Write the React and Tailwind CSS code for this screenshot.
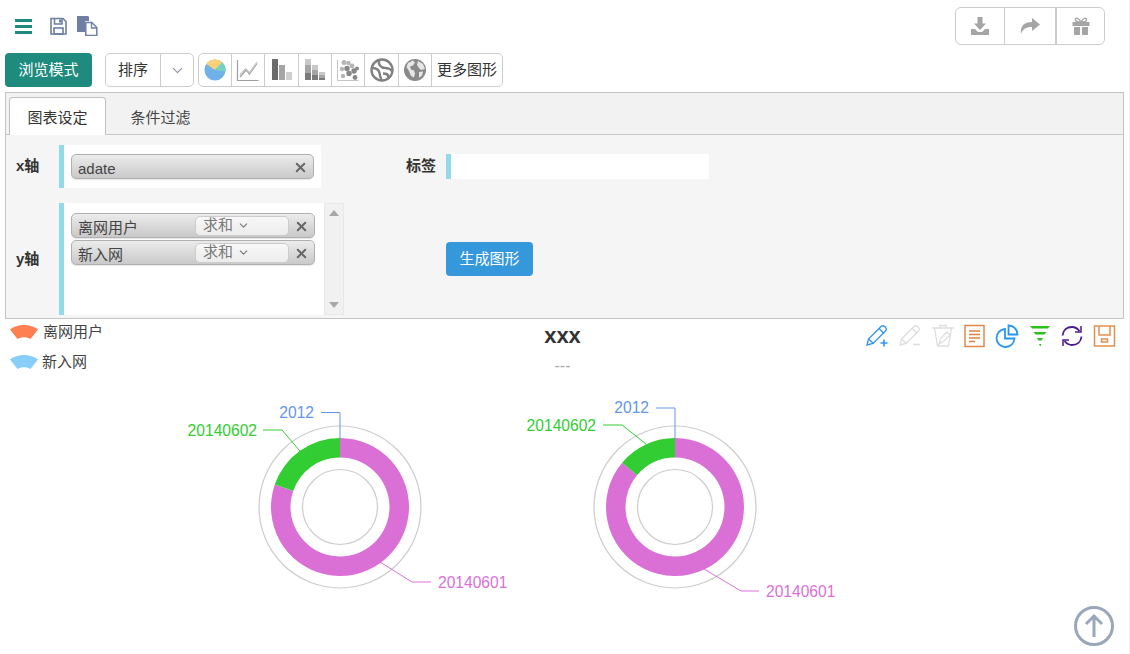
import React from "react";
import { X, ChevronDown } from "lucide-react";

const FONT = '"Liberation Sans","Noto Sans CJK SC",sans-serif';

function polar(cx, cy, r, deg) {
  const a = ((deg - 90) * Math.PI) / 180;
  return [cx + r * Math.cos(a), cy + r * Math.sin(a)];
}
function sector(cx, cy, r0, r1, from, to) {
  const large = to - from > 180 ? 1 : 0;
  const [a, b] = polar(cx, cy, r1, from);
  const [c, d] = polar(cx, cy, r1, to);
  const [e, f] = polar(cx, cy, r0, to);
  const [g, h] = polar(cx, cy, r0, from);
  return `M${a} ${b}A${r1} ${r1} 0 ${large} 1 ${c} ${d}L${e} ${f}A${r0} ${r0} 0 ${large} 0 ${g} ${h}Z`;
}

function Donut({ green, l2012, l0602, l0601, className }) {
  const cx = 170, cy = 120;
  return (
    <svg width="340" height="224" viewBox="0 0 340 224" className={className} style={{ fontFamily: FONT }}>
      <circle cx={cx} cy={cy} r="81" fill="none" stroke="#ccc" strokeWidth="1.2" />
      <circle cx={cx} cy={cy} r="37.5" fill="none" stroke="#ccc" strokeWidth="1.2" />
      <path d={sector(cx, cy, 49.5, 69, 0, 360 - green - 0.001)} fill="#da70d6" />
      <path d={sector(cx, cy, 49.5, 69, 360 - green, 360)} fill="#32cd32" />
      <polyline points={l2012.line} fill="none" stroke="#6495ed" strokeWidth="1" />
      <polyline points={l0602.line} fill="none" stroke="#32cd32" strokeWidth="1" />
      <polyline points={l0601.line} fill="none" stroke="#da70d6" strokeWidth="1" />
      <text x={l2012.x} y={l2012.y} textAnchor="end" fontSize="15.6" fill="#6495ed">2012</text>
      <text x={l0602.x} y={l0602.y} textAnchor="end" fontSize="15.6" fill="#32cd32">20140602</text>
      <text x={l0601.x} y={l0601.y} fontSize="15.6" fill="#da70d6">20140601</text>
    </svg>
  );
}

function Fan({ color }) {
  return (
    <svg width="28" height="16" viewBox="0 0 28 16">
      <path d="M0 5.5C7-.6 21-.6 28 5.5L20.5 15C16.500 12.500 11.500 12.500 7.500 15Z" fill={color} />
    </svg>
  );
}

const ChartIcons = [
  <svg key="pie" width="22" height="22" viewBox="0 0 24 24">
    <circle cx="12" cy="12" r="11.500" fill="#6fb1e8" />
    <path d="M12 12L2.500 5.500A11.500 11.500 0 0 1 20 3.700Z" fill="#fbd078" />
    <path d="M12 12L20 3.700A11.500 11.500 0 0 1 23.500 13.600Z" fill="#72d4c4" />
  </svg>,
  <svg key="line" width="24" height="24" viewBox="0 0 24 24" fill="none" stroke="#9e9e9e" strokeWidth="1.200">
    <path d="M1.500 2v20.500h21" />
    <path d="M4 19l6-7 3.500 4L21 5.500" />
    <path d="M4 16.500l5.500-6 4 4L21 4" stroke="#c8c8c8" />
  </svg>,
  <svg key="bar" width="24" height="24" viewBox="0 0 24 24">
    <rect x="2" y="1" width="6" height="21" fill="#6b6b6b" />
    <rect x="9" y="7" width="6" height="15" fill="#a5a5a5" />
    <rect x="16" y="14" width="6" height="8" fill="#cfcfcf" />
  </svg>,
  <svg key="stack" width="24" height="24" viewBox="0 0 24 24">
    <rect x="2" y="1" width="6" height="6" fill="#c8c8c8" /><rect x="2" y="7" width="6" height="8" fill="#a5a5a5" /><rect x="2" y="15" width="6" height="7" fill="#7a7a7a" />
    <rect x="9" y="7" width="6" height="5" fill="#c8c8c8" /><rect x="9" y="12" width="6" height="5" fill="#a5a5a5" /><rect x="9" y="17" width="6" height="5" fill="#7a7a7a" />
    <rect x="16" y="14" width="6" height="3" fill="#c8c8c8" /><rect x="16" y="17" width="6" height="2.500" fill="#a5a5a5" /><rect x="16" y="19.500" width="6" height="2.500" fill="#7a7a7a" />
  </svg>,
  <svg key="scatter" width="24" height="24" viewBox="0 0 24 24">
    <path d="M1.500 2v20.500h21" fill="none" stroke="#c4c4c4" strokeWidth="1" />
    <g fill="#b5b5b5">
      <circle cx="8" cy="4.500" r="2.500" /><circle cx="12.500" cy="5" r="2.200" /><circle cx="6" cy="11" r="2.200" /><circle cx="16" cy="8" r="2.400" /><circle cx="7" cy="18" r="2.200" />
    </g>
    <g fill="#868686">
      <circle cx="11" cy="10.500" r="2.700" /><circle cx="18" cy="13" r="2.700" /><circle cx="13" cy="15.500" r="2.700" /><circle cx="21" cy="10.500" r="2" /><circle cx="19" cy="19.500" r="2.400" />
    </g>
  </svg>,
  <svg key="globe1" width="24" height="24" viewBox="0 0 24 24" fill="none" stroke="#808080" strokeWidth="2.400">
    <circle cx="12" cy="12" r="10.500" />
    <path d="M2 10c5 0 7 2 7.500 5s1 5 2 7" />
    <path d="M9 2.500c-1 4 2 7.500 6 7.500 3 0 5.500 1 6.500 3" />
    <path d="M13 15.500c3 0 5.500 0 5.500 5" />
  </svg>,
  <svg key="globe2" width="24" height="24" viewBox="0 0 24 24">
    <circle cx="12" cy="12" r="11" fill="#8a8a8a" />
    <path d="M5 5l5-2.500 2 2-2 3-3 1 1 3 3 1 1 3-1 4-3-1.500-2-5L3.500 9zM15 3l5 3 2 5-4 1-2-2-2-3zM16 14l4-.5-1 4-3 2.500z" fill="#e6e6e6" />
  </svg>,
];

const chartCellWidths = ["w-[32px]", "w-[33px]", "w-[34px]", "w-[33px]", "w-[33px]", "w-[34px]", "w-[33px]"];

function GroupCell({ className = "", children }) {
  return <div className={`flex items-center justify-center h-full border-l border-[#ccc] first:border-l-0 ${className}`}>{children}</div>;
}

function Chip({ label, withSum, className = "" }) {
  return (
    <div className={`flex items-center rounded-[5px] border border-[#b0b0b0] bg-gradient-to-b from-[#ececec] to-[#c9c9c9] shadow-[0_1px_1px_rgba(0,0,0,0.1)] text-[#444] text-[15px] pl-[6px] ${className}`}>
      <span className="flex-1 mt-[5px]">{label}</span>
      {withSum && (
        <div className="flex items-center w-[94px] h-[20px] mr-[5px] pl-[7px] rounded-[5px] border border-[#ccc] bg-gradient-to-b from-[#f8f8f8] to-[#ececec] text-[#777] gap-[4px] mt-[1px]">
          <span className="-mt-[2px]">求和</span>
          <ChevronDown size={13} strokeWidth={2} color="#777" className="-mt-[2px]" />
        </div>
      )}
      <X size={15} strokeWidth={3.200} color="#666" className="mr-[5px] mt-[1px] shrink-0" />
    </div>
  );
}

function ToolIcons() {
  return (
    <div className="flex items-center gap-[9px] pr-[13px]">
      <svg width="24" height="24" viewBox="0 0 24 24" fill="none" stroke="#2f95f2" strokeWidth="1.300">
        <path d="M2 21l1.500-6L16 2.500c1-1 2.500-1 3.500 0l1 1c1 1 1 2.500 0 3.500L8 19.500z" /><path d="M14 4.500l5 5M3.500 15l5 4.500" />
        <path d="M19 15.500v7M15.500 19h7" strokeWidth="1.600" />
      </svg>
      <svg width="24" height="24" viewBox="0 0 24 24" fill="none" stroke="#dedede" strokeWidth="1.300">
        <path d="M2 21l1.500-6L16 2.500c1-1 2.500-1 3.500 0l1 1c1 1 1 2.500 0 3.500L8 19.500z" /><path d="M14 4.500l5 5M3.500 15l5 4.500" />
        <path d="M15 20.500h7" strokeWidth="1.600" />
      </svg>
      <svg width="24" height="24" viewBox="0 0 24 24" fill="none" stroke="#dedede" strokeWidth="1.300">
        <path d="M1 4h22M9 4V1.500h6V4" /><path d="M3.500 4l3 18h11l3-18" /><path d="M8 20l2-6 6-6 3 3-6 6z" />
      </svg>
      <svg width="22" height="24" viewBox="0 0 22 24" fill="none" stroke="#e0813f" strokeWidth="1.400">
        <rect x="1" y="1.500" width="19" height="21" />
        <path d="M5 7h11M5 10.500h11M5 14h11M5 17.500h6" />
      </svg>
      <svg width="24" height="24" viewBox="0 0 24 24" fill="none" stroke="#2295f5" strokeWidth="1.800">
        <path d="M10 5a9 9 0 1 0 9.500 9.500H10z" /><path d="M13.500 1.500a9 9 0 0 1 9 9h-9z" />
      </svg>
      <svg width="22" height="24" viewBox="0 0 22 24" fill="#2cc21b" className="ml-[1px]">
        <path d="M1 2h20l-2 2.500H3z" /><path d="M4.500 8h13l-2 2.500H6.500z" /><path d="M8 14h6l-1.500 2.500h-3z" /><path d="M10 20h2.500l-1.200 2.500z" />
      </svg>
      <svg width="24" height="24" viewBox="0 0 24 24" fill="none" stroke="#4b1b91" strokeWidth="1.800">
        <path d="M2.500 11.500C3 6 7 3 12 3c3.500 0 5.500 1.500 7.500 4" /><path d="M21 2v6h-6" strokeWidth="1.500" />
        <path d="M21.500 12.500C21 18 17 21 12 21c-3.500 0-5.500-1.500-7.500-4" /><path d="M3 22v-6h6" strokeWidth="1.500" />
      </svg>
      <svg width="23" height="24" viewBox="0 0 23 24" fill="none" stroke="#e0914f" strokeWidth="1.500">
        <path d="M1.500 2h20v20h-20z" /><path d="M6 2v9h11V2" /><rect x="8.500" y="15" width="6" height="3" />
      </svg>
    </div>
  );
}

export default function App() {
  return (
    <div className="w-[1130px] h-[654px] bg-white relative overflow-hidden text-[#333] border-r border-[#f0f0f0]" style={{ fontFamily: FONT }}>
      {/* top bar */}
      <div className="h-[53px] flex items-start justify-between pl-[15px] pr-[24px]">
        <div className="flex items-center gap-[10px] pt-[16px]">
          <svg width="18" height="18" viewBox="0 0 18 18" fill="#1f8a80" className="mr-[7px]">
            <rect y="2" width="17" height="3" /><rect y="8" width="17" height="3" /><rect y="14" width="17" height="3" />
          </svg>
          <svg width="17" height="18" viewBox="0 0 17 18" fill="none" stroke="#6e7fa3" strokeWidth="1.600">
            <path d="M1 1.500h12l3 3V17H1z" /><path d="M4.500 1.500V7h7.500V1.500" /><rect x="4" y="11" width="9" height="6" /><rect x="9" y="2.500" width="2" height="3" fill="#6e7fa3" stroke="none" />
          </svg>
          <svg width="21" height="21" viewBox="0 0 21 21" className="-mt-[1px]">
            <path d="M0 1h11l1 1v4H8v11H0z" fill="#6e7fa3" />
            <path d="M8.800 7.500h6l5 5v8h-11z" fill="#fff" stroke="#6e7fa3" strokeWidth="1.500" />
            <path d="M14.500 7.500v5.500h5" fill="none" stroke="#6e7fa3" strokeWidth="1.300" />
          </svg>
        </div>
        <div className="mt-[7px] flex h-[38px] rounded-[6px] border border-[#ccc]">
          <GroupCell className="w-[48px]">
            <svg width="20" height="20" viewBox="0 0 20 20" fill="#a5a5a5">
              <path d="M7.500 1h5v6.500h3.500L10 14 4 7.500h3.500z" /><path d="M1 13h4l3 3h4l3-3h4v6H1z" />
            </svg>
          </GroupCell>
          <GroupCell className="w-[51px]">
            <svg width="22" height="18" viewBox="0 0 22 18" fill="#a5a5a5"><path d="M13 1l8 6.500-8 6.500V10C8 10 4 11 2 17 1 9 5 5 13 5z" /></svg>
          </GroupCell>
          <GroupCell className="w-[49px] !border-l-2">
            <svg width="18" height="18" viewBox="0 0 18 18" fill="#a5a5a5">
              <rect x="0.500" y="5" width="17" height="4" /><rect x="2" y="10" width="6" height="8" /><rect x="10" y="10" width="6" height="8" />
              <path d="M9 5C7 1 3 0 3.500 3 3.700 4.500 6 5 9 5c3 0 5.300-.5 5.500-2C15 0 11 1 9 5z" fill="none" stroke="#a5a5a5" strokeWidth="1.500" />
            </svg>
          </GroupCell>
        </div>
      </div>

      {/* toolbar */}
      <div className="flex h-[34px] pl-[5px]">
        <button className="w-[87px] h-full rounded-[4px] bg-[#1f8a7e] text-white text-[15px]">浏览模式</button>
        <div className="ml-[13px] flex w-[89px] h-full rounded-[5px] border border-[#ccc] text-[15px]">
          <GroupCell className="w-[54px] text-[#333]">排序</GroupCell>
          <GroupCell className="flex-1"><ChevronDown size={17} strokeWidth={1.500} color="#8a8fa0" /></GroupCell>
        </div>
        <div className="ml-[4px] flex w-[305px] h-full rounded-[5px] border border-[#ccc] text-[15px]">
          {ChartIcons.map((icon, i) => (
            <GroupCell key={i} className={chartCellWidths[i]}>{icon}</GroupCell>
          ))}
          <GroupCell className="flex-1 text-[#333]">更多图形</GroupCell>
        </div>
      </div>

      {/* settings panel */}
      <div className="ml-[5px] mt-[5px] w-[1119px] h-[227px] border border-[#c4c4c4] bg-[#f5f5f5] flex flex-col">
        <div className="h-[42px] shrink-0 bg-[#f2f2f2] border-b border-[#c8c8c8] flex items-end pl-[3px] text-[15px]">
          <div className="w-[97px] h-[40px] -mb-[3px] pt-[2px] bg-white border border-b-0 border-[#c0c0c0] rounded-t-[4px] flex items-center justify-center">
            图表设定
          </div>
          <div className="w-[109px] h-[40px] -mb-[3px] pt-[2px] flex items-center justify-center text-[#444]">条件过滤</div>
        </div>
        <div className="flex-1 bg-[#f5f5f5] flex relative pl-[10px]">
          <div className="w-[420px] shrink-0 flex flex-col">
            <div className="flex items-center mt-[10px] h-[43px]">
              <span className="w-[43px] font-bold text-[15px] text-[#333]">x轴</span>
              <div className="w-[262px] h-full bg-white border-l-[5px] border-[#92d9ea] flex items-center pl-[7px]">
                <Chip label="adate" className="w-[243px] h-[25px]" />
              </div>
            </div>
            <div className="flex items-center mt-[15px] h-[112px]">
              <span className="w-[43px] font-bold text-[15px] text-[#333]">y轴</span>
              <div className="w-[265px] shrink-0 h-full bg-white border-l-[5px] border-[#92d9ea] pl-[7px] pt-[10px] flex flex-col gap-[2px]">
                <Chip label="离网用户" withSum className="w-[244px] h-[25px]" />
                <Chip label="新入网" withSum className="w-[244px] h-[25px]" />
              </div>
              <div className="w-[20px] shrink-0 h-full bg-[#f1f1f1] border border-[#e8e8e8] flex flex-col justify-between items-center py-[6px]">
                <svg width="10" height="6" viewBox="0 0 10 6" fill="#a8a8a8"><path d="M5 0l5 6H0z" /></svg>
                <svg width="10" height="6" viewBox="0 0 10 6" fill="#a8a8a8"><path d="M5 6L0 0h10z" /></svg>
              </div>
            </div>
          </div>
          <div className="flex flex-col">
            <div className="flex items-center mt-[19px] h-[25px]">
              <span className="w-[40px] font-bold text-[15px] text-[#333] -ml-[30px]">标签</span>
              <div className="w-[263px] h-full bg-white border-l-[5px] border-[#92d9ea]" />
            </div>
            <button className="mt-[63px] ml-[10px] w-[87px] h-[34px] rounded-[4px] bg-[#3498db] text-white text-[15px]">生成图形</button>
          </div>
        </div>
      </div>

      {/* chart header */}
      <div className="relative h-[68px] flex">
        <div className="w-[460px] shrink-0 pl-[10px] pt-[5px] flex flex-col gap-[14px] text-[15px] text-[#444]">
          <div className="flex items-center gap-[5px] h-[16px]"><Fan color="#ff7f50" /><span>离网用户</span></div>
          <div className="flex items-center gap-[4px] h-[16px]"><Fan color="#87cefa" /><span>新入网</span></div>
        </div>
        <div className="w-[205px] shrink-0 flex flex-col items-center">
          <span className="font-bold text-[22px] leading-[24px] mt-[5px] text-[#333]">xxx</span>
          <span className="text-[16px] leading-[14px] mt-[11px] text-[#aaa]">---</span>
        </div>
        <div className="flex-1 flex justify-end items-start pt-[5px]">
          <ToolIcons />
        </div>
      </div>

      {/* donuts */}
      <div className="flex pl-[170px]">
        <Donut
          green={71}
          l2012={{ x: 144, y: 30.5, line: "151,25.5 170,25.5 170,51" }}
          l0602={{ x: 87, y: 48.5, line: "93,43 112,43 130,64" }}
          l0601={{ x: 268, y: 200.5, line: "210,175 242,195 261,195" }}
        />
        <Donut
          className="-ml-[5px]"
          green={50}
          l2012={{ x: 144, y: 25.5, line: "151,21 170,21 170,51" }}
          l0602={{ x: 91, y: 43.5, line: "98,38 117,38 141,57" }}
          l0601={{ x: 261, y: 209.5, line: "199,182 236,204 254,204" }}
        />
      </div>

      {/* back to top */}
      <div className="absolute left-[1074px] top-[606px] w-[40px] h-[40px] rounded-full border-[3px] border-[#9aa7bb] flex items-center justify-center">
        <svg width="24" height="26" viewBox="0 0 24 26" fill="none" stroke="#9aa7bb" strokeWidth="3"><path d="M12 24V3M4 11l8-8 8 8" /></svg>
      </div>
    </div>
  );
}
